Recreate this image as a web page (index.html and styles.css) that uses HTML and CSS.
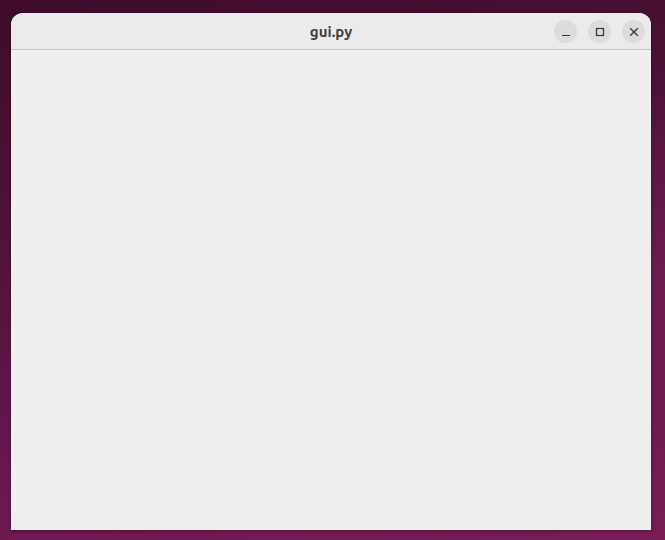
FILE: index.html
```html
<!DOCTYPE html>
<html>
<head>
<meta charset="utf-8">
<link rel="stylesheet" href="styles.css">
</head>
<body>
<div class="desktop">
  <div class="window">
    <div class="titlebar">
      <div class="title">gui.py</div>
      <div class="controls">
        <span class="btn"><svg width="10" height="10" viewBox="0 0 10 10"><path d="M1 8.5h8" stroke="#333" stroke-width="1.2"/></svg></span>
        <span class="btn"><svg width="10" height="10" viewBox="0 0 10 10"><rect x="1.5" y="1.5" width="7" height="7" fill="none" stroke="#333" stroke-width="1.2"/></svg></span>
        <span class="btn"><svg width="10" height="10" viewBox="0 0 10 10"><path d="M1.2 1.2l7.6 7.6M8.8 1.2l-7.6 7.6" stroke="#333" stroke-width="1.3"/></svg></span>
      </div>
    </div>
    <div class="content"></div>
  </div>
</div>
</body>
</html>
```
FILE: styles.css
```css
html, body {
  margin: 0;
  padding: 0;
}
.desktop {
  width: 665px;
  height: 540px;
  box-sizing: border-box;
  padding: 13px 14px 10px 11px;
  background:
    radial-gradient(ellipse 300px 200px at 700px 280px, rgba(140,40,100,0.35), transparent),
    linear-gradient(170deg, #3f0c2b 0%, #4c1237 30%, #63174a 65%, #7a1d56 100%);
  font-family: "Ubuntu", "Noto Sans", "DejaVu Sans", sans-serif;
  overflow: hidden;
}
.window {
  height: 517px;
  display: flex;
  flex-direction: column;
  background: #efefef;
  border-radius: 12px 12px 0 0;
  overflow: hidden;
  box-shadow: 0 1px 4px rgba(0,0,0,0.35);
}
.titlebar {
  height: 36px;
  flex: none;
  background: #ebebeb;
  border-bottom: 1px solid #c4c4c4;
  display: flex;
  align-items: center;
  justify-content: center;
  position: relative;
}
.title {
  font-weight: bold;
  font-size: 15px;
  color: #3d3d3d;
  margin-top: 1px;
}
.controls {
  position: absolute;
  right: 6px;
  top: 7px;
  display: flex;
  gap: 11px;
}
.btn {
  width: 23px;
  height: 23px;
  border-radius: 50%;
  background: #dcdcdc;
  display: flex;
  align-items: center;
  justify-content: center;
}
.content {
  flex: 1;
  background: #efefef;
}
```
